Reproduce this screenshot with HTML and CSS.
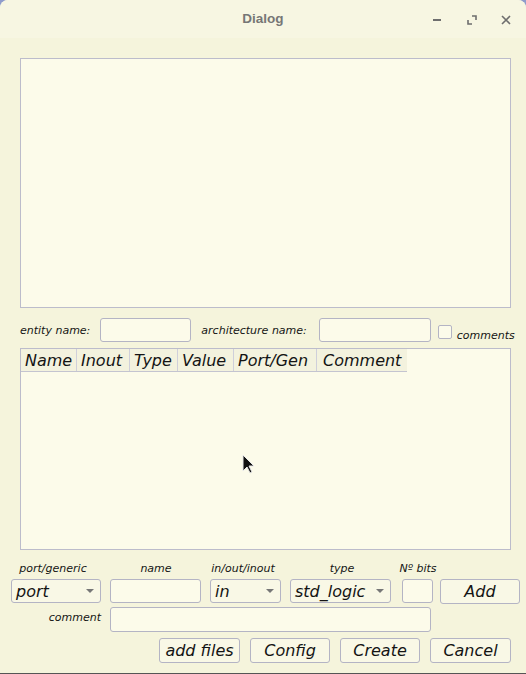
FILE: index.html
```html
<!DOCTYPE html>
<html>
<head>
<meta charset="utf-8">
<link rel="stylesheet" href="styles.css">
</head>
<body>
<div class="window">
  <div class="titlebar">
    <div></div>
    <div class="title">Dialog</div>
    <div class="controls">
      <svg class="ctl" width="12" height="12" viewBox="0 0 12 12"><rect x="1" y="5" width="8" height="2" fill="#6e6e6e"/></svg>
      <svg class="ctl" width="12" height="12" viewBox="0 0 12 12"><path d="M6 2h4v4M6 10H2V6" fill="none" stroke="#6e6e6e" stroke-width="1.6"/></svg>
      <svg class="ctl" width="12" height="12" viewBox="0 0 12 12"><path d="M2 2l8 8M10 2l-8 8" stroke="#6e6e6e" stroke-width="1.6"/></svg>
    </div>
  </div>
  <div class="content">
    <div class="bigbox"></div>
    <div class="namerow">
      <span class="lbl">entity name:</span>
      <div class="field w-entity"></div>
      <span class="lbl arch">architecture name:</span>
      <div class="field w-arch"></div>
      <div class="check"></div>
      <span class="lbl cm">comments</span>
    </div>
    <div class="table">
      <div class="thead">
        <div class="th" style="width:56px">Name</div>
        <div class="th" style="width:53px">Inout</div>
        <div class="th" style="width:48px">Type</div>
        <div class="th" style="width:56px">Value</div>
        <div class="th" style="width:83px">Port/Gen</div>
        <div class="th" style="width:90px">Comment</div>
      </div>
    </div>
    <div class="labelrow">
      <span class="cap">port/generic</span>
      <span class="cap">name</span>
      <span class="cap">in/out/inout</span>
      <span class="cap">type</span>
      <span class="cap">Nº bits</span>
    </div>
    <div class="ctrlrow">
      <div class="combo w-port"><span>port</span><i class="arrow"></i></div>
      <div class="field w-name"></div>
      <div class="combo w-in"><span>in</span><i class="arrow"></i></div>
      <div class="combo w-type"><span>std_logic</span><i class="arrow"></i></div>
      <div class="field w-bits"></div>
      <div class="btn w-add">Add</div>
    </div>
    <div class="commentrow">
      <span class="lbl clbl">comment</span>
      <div class="field w-comment"></div>
    </div>
    <div class="btnrow">
      <div class="btn w-files">add files</div>
      <div class="btn w-b">Config</div>
      <div class="btn w-b">Create</div>
      <div class="btn w-cancel">Cancel</div>
    </div>
  </div>
  <svg class="cursor" width="14" height="22" viewBox="0 0 14 22"><path d="M1 1v16l4-4 3 6 2-1-3-6h5z" fill="#111" stroke="#e8e8e8" stroke-width="1"/></svg>
</div>
</body>
</html>
```
FILE: styles.css
```css
html, body {
  margin: 0;
  padding: 0;
  background: #8f9ccc;
}
body {
  width: 526px;
  height: 674px;
  overflow: hidden;
  font-family: "DejaVu Sans", sans-serif;
  color: #141414;
}
.window {
  position: relative;
  width: 526px;
  height: 673px;
  background: #f5f4dc;
  border-radius: 8px 8px 0 0;
  border-bottom: 1px solid #555;
}
.titlebar {
  height: 38px;
  display: grid;
  grid-template-columns: 1fr auto 1fr;
  align-items: center;
  background: #f7f6e2;
  border-radius: 8px 8px 0 0;
}
.title {
  font-family: "Liberation Sans", sans-serif;
  font-weight: bold;
  font-size: 13.5px;
  color: #767676;
  padding-bottom: 1px;
}
.controls {
  display: flex;
  justify-content: flex-end;
  gap: 22px;
  padding-right: 14px;
  padding-top: 1px;
}
.content {
  padding: 20px 15px 0 20px;
}
.bigbox {
  width: 489px;
  height: 248px;
  border: 1px solid #bcbccb;
  background: #fcfbea;
}
.namerow {
  display: flex;
  align-items: center;
  height: 24px;
  margin-top: 10px;
}
.namerow > *, .ctrlrow > *, .commentrow > *, .btnrow > * { flex-shrink: 0; }
.lbl {
  font-style: italic;
  font-size: 11px;
  white-space: nowrap;
}
.field {
  box-sizing: border-box;
  height: 24px;
  border: 1px solid #b4b4c4;
  border-radius: 3px;
  background: #fcfbea;
}
.w-entity { width: 91px; margin-left: 10px; }
.arch { margin-left: 10px; }
.w-arch { width: 112px; margin-left: 12px; }
.check {
  box-sizing: border-box;
  width: 14px;
  height: 14px;
  border: 1px solid #b4b4c4;
  border-radius: 2px;
  background: #fcfbea;
  margin-left: 7px;
  margin-right: 5px;
  margin-top: 4px;
}
.cm { margin-top: 10px; }
.table {
  margin-top: 6px;
  width: 489px;
  height: 200px;
  border: 1px solid #bcbccb;
  background: #fcfbea;
}
.thead {
  display: flex;
  height: 22px;
  width: 386px;
  border-bottom: 1px solid #c4c4d0;
  background: #f3f2de;
}
.th {
  box-sizing: border-box;
  border-right: 1px solid #cfcfda;
  font-style: italic;
  font-size: 16px;
  line-height: 22px;
  padding-top: 1px;
  padding-left: 4px;
  white-space: nowrap;
}
.th:last-child { border-right: none; padding-left: 6px; }
.labelrow {
  height: 14px;
  margin-top: 12px;
  margin-left: -20px;
  display: grid;
  grid-template-columns: 106px 100px 74px 124px 28px;
  justify-items: center;
  font-size: 11px;
  font-style: italic;
}
.cap { line-height: 14px; white-space: nowrap; }
.ctrlrow {
  display: flex;
  align-items: center;
  margin-left: -9px;
  margin-top: 3px;
  height: 24px;
}
.combo {
  box-sizing: border-box;
  height: 24px;
  border: 1px solid #b4b4c4;
  border-radius: 3px;
  background: #f9f8e6;
  display: flex;
  align-items: center;
  justify-content: space-between;
  padding: 0 6px 0 4px;
  font-size: 16px;
  font-style: italic;
}
.arrow {
  width: 0;
  height: 0;
  border-left: 4px solid transparent;
  border-right: 4px solid transparent;
  border-top: 4px solid #777;
}
.w-port { width: 90px; }
.w-name { width: 91px; margin-left: 9px; }
.w-in { width: 71px; margin-left: 9px; }
.w-type { width: 101px; margin-left: 9px; }
.w-bits { width: 31px; margin-left: 11px; }
.btn {
  box-sizing: border-box;
  height: 25px;
  border: 1px solid #b4b4c4;
  border-radius: 3px;
  background: #f9f8e6;
  display: flex;
  align-items: center;
  justify-content: center;
  font-size: 16px;
  font-style: italic;
}
.w-add { width: 80px; margin-left: 7px; }
.commentrow {
  display: flex;
  align-items: center;
  margin-top: 4px;
  height: 25px;
}
.clbl {
  width: 81px;
  text-align: right;
  margin-top: -4px;
}
.w-comment { width: 321px; height: 25px; margin-left: 9px; }
.btnrow {
  display: flex;
  margin-top: 6px;
  padding-left: 139px;
}
.w-files { width: 81px; }
.w-b { width: 80px; margin-left: 10px; }
.w-cancel { width: 81px; margin-left: 10px; }
.cursor {
  position: absolute;
  left: 242px;
  top: 454px;
}
```
